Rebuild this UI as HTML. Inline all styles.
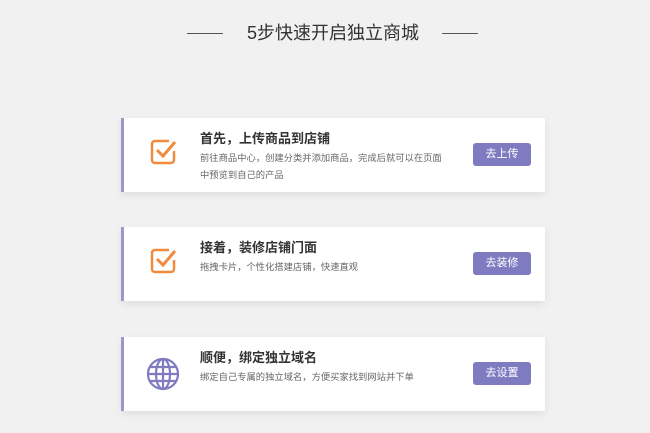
<!DOCTYPE html>
<html><head><meta charset="utf-8"><style>
body{margin:0;width:650px;height:433px;background:#f1f1f1;font-family:"Liberation Sans","Noto Sans CJK SC",sans-serif;position:relative;overflow:hidden}
.h{position:absolute;top:20px;left:8px;width:650px;text-align:center;font-size:18px;color:#333;line-height:26px}
.ln{position:absolute;top:33px;height:1px;width:36px;background:#555}
.card{position:absolute;left:121px;width:424px;height:74px;background:#fff;border-left:3px solid #9b97c8;box-sizing:border-box;box-shadow:0 3px 8px rgba(0,0,0,.08)}
.t{position:absolute;left:76px;top:10px;font-size:13px;font-weight:bold;color:#333}
.d{position:absolute;left:76px;top:32px;width:244px;font-size:9.3px;line-height:17px;color:#666}
.b{position:absolute;left:349px;top:25px;width:58px;height:23px;background:#7f7bc0;color:#fff;font-size:11px;line-height:23px;text-align:center;border-radius:3px}
.i{position:absolute;left:25px;top:20px}
</style></head><body>
<div class="ln" style="left:187px"></div><div class="ln" style="left:442px"></div>
<div class="h">5步快速开启独立商城</div>
<div class="card" style="top:118px">
<svg class="i" width="28" height="28" viewBox="0 0 28 28"><path d="M20 3H6a3 3 0 0 0-3 3v16a3 3 0 0 0 3 3h16a3 3 0 0 0 3-3V13" fill="none" stroke="#f08a3c" stroke-width="2.5"/><path d="M8 12l6 6L26 4" fill="none" stroke="#f08a3c" stroke-width="3"/></svg>
<div class="t">首先，上传商品到店铺</div><div class="d">前往商品中心，创建分类并添加商品，完成后就可以在页面中预览到自己的产品</div><div class="b">去上传</div></div>
<div class="card" style="top:227px">
<svg class="i" width="28" height="28" viewBox="0 0 28 28"><path d="M20 3H6a3 3 0 0 0-3 3v16a3 3 0 0 0 3 3h16a3 3 0 0 0 3-3V13" fill="none" stroke="#f08a3c" stroke-width="2.5"/><path d="M8 12l6 6L26 4" fill="none" stroke="#f08a3c" stroke-width="3"/></svg>
<div class="t">接着，装修店铺门面</div><div class="d">拖拽卡片，个性化搭建店铺，快速直观</div><div class="b">去装修</div></div>
<div class="card" style="top:337px">
<svg class="i" width="34" height="34" viewBox="0 0 34 34" style="left:22px;top:20px"><g fill="none" stroke="#7f7bc0" stroke-width="2.2"><circle cx="17" cy="17" r="15"/><ellipse cx="17" cy="17" rx="7" ry="15"/><line x1="17" y1="2" x2="17" y2="32"/><path d="M4 10h26M2 17h30M4 24h26"/></g></svg>
<div class="t">顺便，绑定独立域名</div><div class="d" style="width:300px">绑定自己专属的独立域名，方便买家找到网站并下单</div><div class="b">去设置</div></div>
</body></html>
